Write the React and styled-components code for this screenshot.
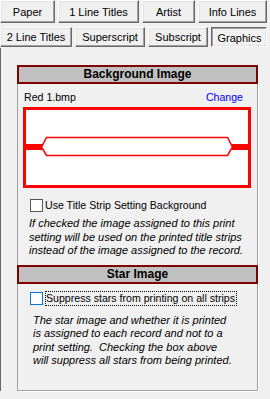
import React from "react";
import styled, { createGlobalStyle, css } from "styled-components";

const GlobalStyle = createGlobalStyle`
  html, body { margin: 0; padding: 0; background: #f0f0f0; }
  body {
    font-family: "Liberation Sans", Arial, sans-serif;
    font-size: 11px;
    color: #000;
  }
`;

const Root = styled.div`
  width: 270px;
  height: 399px;
  overflow: hidden;
  background: #f0f0f0;
`;

const TabRow = styled.div`
  display: flex;
  gap: 3px;
  height: ${(p) => p.$h}px;
  margin-top: ${(p) => p.$mt}px;
`;

const TabButton = styled.button`
  box-sizing: border-box;
  width: ${(p) => p.$w}px;
  height: 100%;
  margin: 0;
  padding: 0;
  font: 11px "Liberation Sans", Arial, sans-serif;
  color: #000;
  background: #f0f0f0;
  border: 1px solid;
  border-color: #ffffff #696969 #696969 #ffffff;
  box-shadow: inset -1px -1px #a0a0a0, inset 1px 1px #e3e3e3;
  ${(p) =>
    p.$active &&
    css`
      border-color: #696969 #ffffff #ffffff #696969;
      box-shadow: inset 1px 1px #a0a0a0, inset -1px -1px #e3e3e3;
      background-color: #f4f4f4;
      background-image: repeating-conic-gradient(#ffffff 0 25%, #e6e6e6 0 50%);
      background-size: 2px 2px;
      padding: 2px 0 0 1px;
    `}
`;

const Page = styled.div`
  box-sizing: border-box;
  height: 343px;
  margin-top: 1px;
  border-left: 1px solid #696969;
  padding: 17px 12px 0 16px;
`;

const GroupBox = styled.div`
  box-sizing: border-box;
  height: 326px;
  border: 1px solid #a0a0a0;
  border-top: none;
  box-shadow: 1px 1px 0 #ffffff;
`;

const SectionHeader = styled.div`
  box-sizing: border-box;
  height: 19px;
  margin: ${(p) => p.$mt}px -1px 0;
  border: 2px solid #800000;
  background: #c0c0c0;
  font-weight: bold;
  font-size: 12px;
  line-height: 15px;
  text-align: center;
`;

const FileRow = styled.div`
  display: flex;
  justify-content: space-between;
  margin: 7px 14px 0 6px;
  line-height: 13px;
  font-size: 10.6px;
`;

const LinkText = styled.span`
  color: #0000ff;
  cursor: pointer;
`;

const Preview = styled.div`
  box-sizing: border-box;
  height: 81px;
  margin: 3px 6px 0 5px;
  border: 3px solid #ff0000;
  background: #ffffff;
  svg { display: block; }
`;

const CheckRow = styled.label`
  display: flex;
  align-items: center;
  gap: 2px;
  margin: ${(p) => p.$mt}px 0 0 12px;
  line-height: 13px;
  font-size: 10.6px;
  white-space: nowrap;
`;

const Box = styled.span`
  box-sizing: border-box;
  flex: none;
  width: 13px;
  height: 13px;
  border: 1px solid ${(p) => (p.$focus ? "#0078d7" : "#555555")};
  background: #ffffff;
`;

const Label = styled.span`
  ${(p) =>
    p.$focus &&
    css`
      border: 1px dotted #000;
      padding: 0 1px 0 0;
    `}
`;

const Note = styled.p`
  margin: ${(p) => p.$mt}px 0 0 ${(p) => p.$ml}px;
  font-style: italic;
  line-height: 13.5px;
  white-space: pre;
`;

const topTabs = [
  { label: "Paper", w: 55 },
  { label: "1 Line Titles", w: 81 },
  { label: "Artist", w: 53 },
  { label: "Info Lines", w: 69 },
];

const bottomTabs = [
  { label: "2 Line Titles", w: 72 },
  { label: "Superscript", w: 70 },
  { label: "Subscript", w: 60 },
  { label: "Graphics", w: 56, active: true },
];

function StripPreview() {
  return (
    <svg width="222" height="75" viewBox="0 0 222 75">
      <rect x="0" y="34" width="16" height="6" fill="#ff0000" />
      <rect x="206" y="34" width="16" height="6" fill="#ff0000" />
      <polygon
        points="15.5,37 20.5,27.5 201.5,27.5 206.5,37 201.5,45.5 20.5,45.5"
        fill="#ffffff"
        stroke="#ff0000"
        strokeWidth="1.5"
      />
    </svg>
  );
}

export default function App() {
  return (
    <Root>
      <GlobalStyle />
      <TabRow $h={23} $mt={0}>
        {topTabs.map((t) => (
          <TabButton key={t.label} $w={t.w}>
            {t.label}
          </TabButton>
        ))}
      </TabRow>
      <TabRow $h={20} $mt={4}>
        {bottomTabs.map((t) => (
          <TabButton key={t.label} $w={t.w} $active={t.active}>
            {t.label}
          </TabButton>
        ))}
      </TabRow>
      <Page>
        <GroupBox>
          <SectionHeader $mt={0}>Background Image</SectionHeader>
          <FileRow>
            <span>Red 1.bmp</span>
            <LinkText>Change</LinkText>
          </FileRow>
          <Preview>
            <StripPreview />
          </Preview>
          <CheckRow $mt={11}>
            <Box />
            <Label>Use Title Strip Setting Background</Label>
          </CheckRow>
          <Note $mt={5} $ml={11}>
            {"If checked the image assigned to this print\nsetting will be used on the printed title strips\ninstead of the image assigned to the record."}
          </Note>
          <SectionHeader $mt={7}>Star Image</SectionHeader>
          <CheckRow $mt={7}>
            <Box $focus />
            <Label $focus>Suppress stars from printing on all strips</Label>
          </CheckRow>
          <Note $mt={8} $ml={15}>
            {"The star image and whether it is printed\nis assigned to each record and not to a\nprint setting.  Checking the box above\nwill suppress all stars from being printed."}
          </Note>
        </GroupBox>
      </Page>
    </Root>
  );
}
